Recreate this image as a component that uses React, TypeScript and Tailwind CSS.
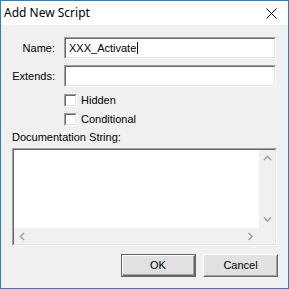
import React from 'react';

const sunken = 'border-t border-l border-t-[#a0a0a0] border-l-[#a0a0a0] border-b border-r border-b-white border-r-white';
const sunkenInner = 'border-t border-l border-t-[#696969] border-l-[#696969] border-b border-r border-b-[#e3e3e3] border-r-[#e3e3e3]';

function TextBox({ value, caret }: { value?: string; caret?: boolean }) {
  return (
    <div className={`w-[212px] h-[22px] ${sunken}`}>
      <div className={`h-full bg-white flex items-center pl-[3px] ${sunkenInner}`}>
        {value && <span className="leading-none">{value}</span>}
        {caret && <span className="w-px h-[12px] bg-black ml-[1px]" />}
      </div>
    </div>
  );
}

function CheckRow({ label }: { label: string }) {
  return (
    <div className="flex items-center ml-[63px] h-[13px]">
      <div className={`w-[13px] h-[13px] ${sunken}`}>
        <div className={`w-full h-full bg-white ${sunkenInner}`} />
      </div>
      <span className="ml-[4px] leading-none">{label}</span>
    </div>
  );
}

function Chevron({ dir }: { dir: 'up' | 'down' | 'left' | 'right' }) {
  const d = {
    up: 'M1 5l3.5-3.5L8 5',
    down: 'M1 1.5L4.5 5 8 1.5',
    left: 'M5 1L1.5 4.5 5 8',
    right: 'M1.5 1L5 4.5 1.5 8',
  }[dir];
  const vertical = dir === 'up' || dir === 'down';
  return (
    <svg width={vertical ? 9 : 7} height={vertical ? 7 : 9} viewBox={vertical ? '0 0 9 7' : '0 0 7 9'} fill="none">
      <path d={d} stroke="#a3a3a3" strokeWidth="1.6" />
    </svg>
  );
}

function Button({ label, isDefault }: { label: string; isDefault?: boolean }) {
  return (
    <div className={`w-[75px] h-[23px] ${isDefault ? 'border border-[#646464]' : 'border-t border-l border-t-white border-l-white border-b border-r border-b-[#696969] border-r-[#696969]'}`}>
      <div className={`h-full ${isDefault ? 'border-t border-l border-t-white border-l-white border-b border-r border-b-[#696969] border-r-[#696969]' : 'border-t border-l border-t-[#e3e3e3] border-l-[#e3e3e3] border-b border-r border-b-[#a0a0a0] border-r-[#a0a0a0]'}`}>
        <div className={`h-full flex items-center justify-center bg-[#e1e1e1] ${isDefault ? 'border-b border-r border-b-[#a0a0a0] border-r-[#a0a0a0]' : ''}`}>
          {label}
        </div>
      </div>
    </div>
  );
}

export default function App() {
  return (
    <div className="w-[289px] h-[289px] border border-[#1883d7] bg-[#f0f0f0] flex flex-col text-[11px] text-black" style={{ fontFamily: '"Liberation Sans", Arial, sans-serif' }}>
      <div className="h-[24px] bg-white flex items-center justify-between pl-[3px] pr-[11px] shrink-0">
        <span className="text-[12px] leading-none" style={{ fontFamily: '"Noto Sans", "Open Sans", sans-serif' }}>Add New Script</span>
        <svg width="11" height="11" viewBox="0 0 11 11" fill="none" className="mt-[1px]">
          <path d="M0.5 0.5l10 10M10.5 0.5l-10 10" stroke="#000" strokeWidth="1" />
        </svg>
      </div>

      <div className="flex flex-col pt-[12px]">
        <div className="flex items-center">
          <span className="w-[54px] text-right">Name:</span>
          <div className="ml-[9px]"><TextBox value="XXX_Activate" caret /></div>
        </div>
        <div className="flex items-center mt-[6px]">
          <span className="w-[54px] text-right">Extends:</span>
          <div className="ml-[9px]"><TextBox /></div>
        </div>

        <div className="mt-[7px] flex flex-col gap-[6px]">
          <CheckRow label="Hidden" />
          <CheckRow label="Conditional" />
        </div>

        <span className="ml-[11px] mt-[6px] leading-none">Documentation String:</span>

        <div className={`ml-[11px] mt-[5px] w-[265px] h-[98px] ${sunken}`}>
          <div className={`h-full flex flex-col ${sunkenInner}`}>
            <div className="flex flex-1">
              <div className="flex-1 bg-white" />
              <div className="w-[16px] flex flex-col items-center justify-between py-[5px]">
                <Chevron dir="up" />
                <Chevron dir="down" />
              </div>
            </div>
            <div className="h-[16px] flex items-center">
              <div className="flex-1 flex items-center justify-between px-[5px]">
                <Chevron dir="left" />
                <Chevron dir="right" />
              </div>
              <div className="w-[16px] h-full bg-[#f0f0f0]" />
            </div>
          </div>
        </div>

        <div className="flex justify-end gap-[7px] mr-[10px] mt-[8px]">
          <Button label="OK" isDefault />
          <Button label="Cancel" />
        </div>
      </div>
    </div>
  );
}
